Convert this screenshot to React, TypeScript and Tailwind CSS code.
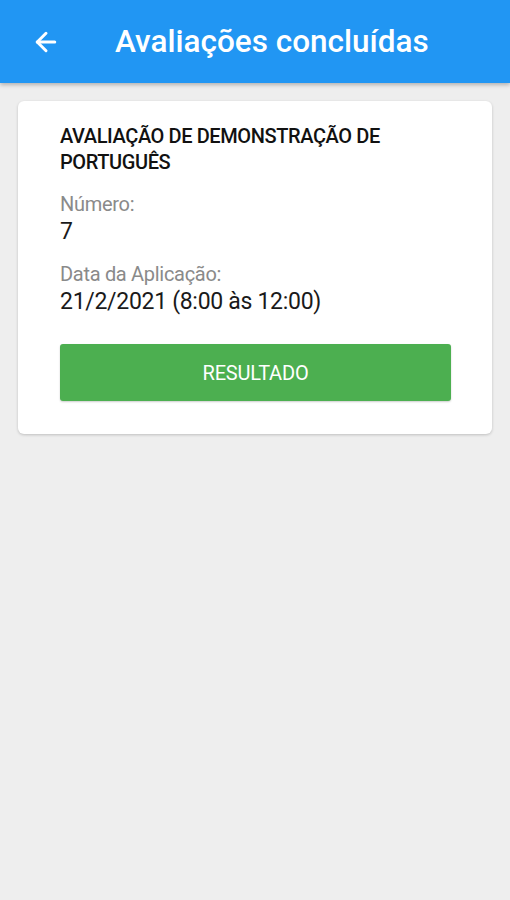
import { ArrowLeft } from "lucide-react";

const Field = ({ label, value, className }: { label: string; value: string; className: string }) => (
  <div className={className}>
    <div className="text-[20px] leading-[25px] text-[#8a8a8a] tracking-[-0.3px]">{label}</div>
    <div className="text-[23px] leading-[30px] text-[#1a1a1a] tracking-[-0.3px]">{value}</div>
  </div>
);

export default function App() {
  return (
    <div className="min-h-[900px] bg-[#eeeeee] font-['Roboto',sans-serif]">
      <header className="flex h-[83px] items-center bg-[#2196f3] pl-[31px] shadow-[0_2px_4px_rgba(0,0,0,0.25)]">
        <ArrowLeft className="h-[30px] w-[30px] text-white" strokeWidth={2.4} />
        <h1 className="ml-[54px] text-[31.5px] font-medium text-white tracking-[0px]">
          Avaliações concluídas
        </h1>
      </header>

      <main className="px-[18px] pt-[18px]">
        <div className="rounded-[6px] bg-white pb-[33px] pl-[42px] pr-[41px] pt-[22px] shadow-[0_1px_3px_rgba(0,0,0,0.2)]">
          <h2 className="text-[20px] font-medium leading-[26px] text-[#111] tracking-[-0.4px]">
            AVALIAÇÃO DE DEMONSTRAÇÃO DE PORTUGUÊS
          </h2>
          <Field className="mt-[17px]" label="Número:" value="7" />
          <Field className="mt-[15px]" label="Data da Aplicação:" value="21/2/2021 (8:00 às 12:00)" />
          <button
            type="button"
            className="mt-[27px] flex h-[57px] w-full items-center justify-center rounded-[3px] bg-[#4caf50] text-[20px] text-white tracking-[-0.2px] shadow-[0_1px_2px_rgba(0,0,0,0.2)]">
            RESULTADO
          </button>
        </div>
      </main>
    </div>
  );
}
